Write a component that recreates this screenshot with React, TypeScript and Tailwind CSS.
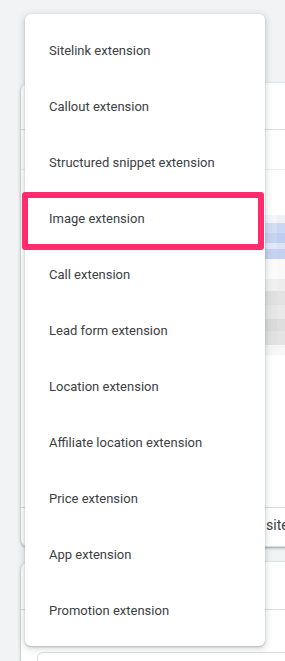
import React from 'react';

const items = [
  'Sitelink extension',
  'Callout extension',
  'Structured snippet extension',
  'Image extension',
  'Call extension',
  'Lead form extension',
  'Location extension',
  'Affiliate location extension',
  'Price extension',
  'App extension',
  'Promotion extension',
];

// blurred thumbnail peeking out from behind the menu
const pixels: { y: number; h: number; cells: string[] }[] = [
  { y: 0, h: 8, cells: ['#f4f6fb', '#eef1f8', '#f3f5fa'] },
  { y: 8, h: 10, cells: ['#d3dcf3', '#cad6f2', '#d8e0f4'] },
  { y: 18, h: 10, cells: ['#c6d3f1', '#bfcdf0', '#cad6f2'] },
  { y: 28, h: 6, cells: ['#e2e8f6', '#dbe3f5', '#e4e9f7'] },
  { y: 34, h: 10, cells: ['#c5d2f1', '#c3d0f0', '#cdd8f3'] },
  { y: 44, h: 20, cells: ['#fbfbfb', '#f9f9f9', '#fafafa'] },
  { y: 64, h: 12, cells: ['#f0f0f0', '#ededed', '#f1f1f1'] },
  { y: 76, h: 14, cells: ['#e0e0e0', '#e3e3e3', '#e6e6e6'] },
  { y: 90, h: 14, cells: ['#e6e6e6', '#e9e9e9', '#ebebeb'] },
  { y: 104, h: 12, cells: ['#dadada', '#dedede', '#e2e2e2'] },
  { y: 116, h: 14, cells: ['#e1e1e1', '#e4e4e4', '#e7e7e7'] },
  { y: 130, h: 10, cells: ['#f6f6f6', '#f7f7f7', '#f8f8f8'] },
];

const Thumb: React.FC = () => (
  <svg width="36" height="140" viewBox="0 0 36 140">
    {pixels.map((row) =>
      row.cells.map((c, i) => (
        <rect key={`${row.y}-${i}`} x={i * 12} y={row.y} width="12" height={row.h} fill={c} />
      ))
    )}
  </svg>
);

export default function App() {
  return (
    <div
      className="relative h-[661px] w-[285px] overflow-hidden bg-[#f1f3f4]"
      style={{ fontFamily: 'Roboto, "Liberation Sans", sans-serif' }}
    >
      {/* Page behind the menu */}
      <div className="flex flex-col pl-[21px] pt-[83px]">
        <div className="flex h-[464px] w-[320px] flex-col rounded-lg bg-white shadow-[0_1px_2px_rgba(60,64,67,0.3),0_1px_3px_1px_rgba(60,64,67,0.15)]">
          <div className="h-[47px] border-b border-[#dadce0]" />
          <div className="h-[40px] border-b border-[#eceff1]" />
          <div className="flex h-[337px] pl-[244px] pt-[45px]">
            <Thumb />
          </div>
          <div className="flex h-[40px] items-center border-y border-[#dadce0] pb-[4px] pl-[245px] text-[14px] text-[#3c4043]">
            site
          </div>
        </div>
        <div className="mt-[15px] flex w-[320px] flex-col rounded-t-lg bg-white shadow-[0_1px_2px_rgba(60,64,67,0.3),0_1px_3px_1px_rgba(60,64,67,0.15)]">
          <div className="h-[48px] border-b border-[#dadce0]" />
          <div className="pl-[16px] pt-[42px]">
            <div className="h-[40px] rounded-t-md border border-[#dadce0] bg-white" />
          </div>
        </div>
      </div>

      {/* Extension type menu */}
      <div className="absolute left-[25px] top-[14px] w-[240px] rounded-md bg-white py-2 shadow-[0_1px_2px_0_rgba(60,64,67,0.3),0_2px_6px_2px_rgba(60,64,67,0.15)]">
        {items.map((label) => (
          <div key={label} className="flex h-14 items-center px-6 pt-px text-[13px] text-[#3c4043]">
            {label}
          </div>
        ))}
      </div>

      {/* Highlight around "Image extension" */}
      <div className="absolute left-[22px] top-[192px] h-[58px] w-[242px] rounded-[3px] border-[6px] border-[#ff2d6e]" />
    </div>
  );
}
